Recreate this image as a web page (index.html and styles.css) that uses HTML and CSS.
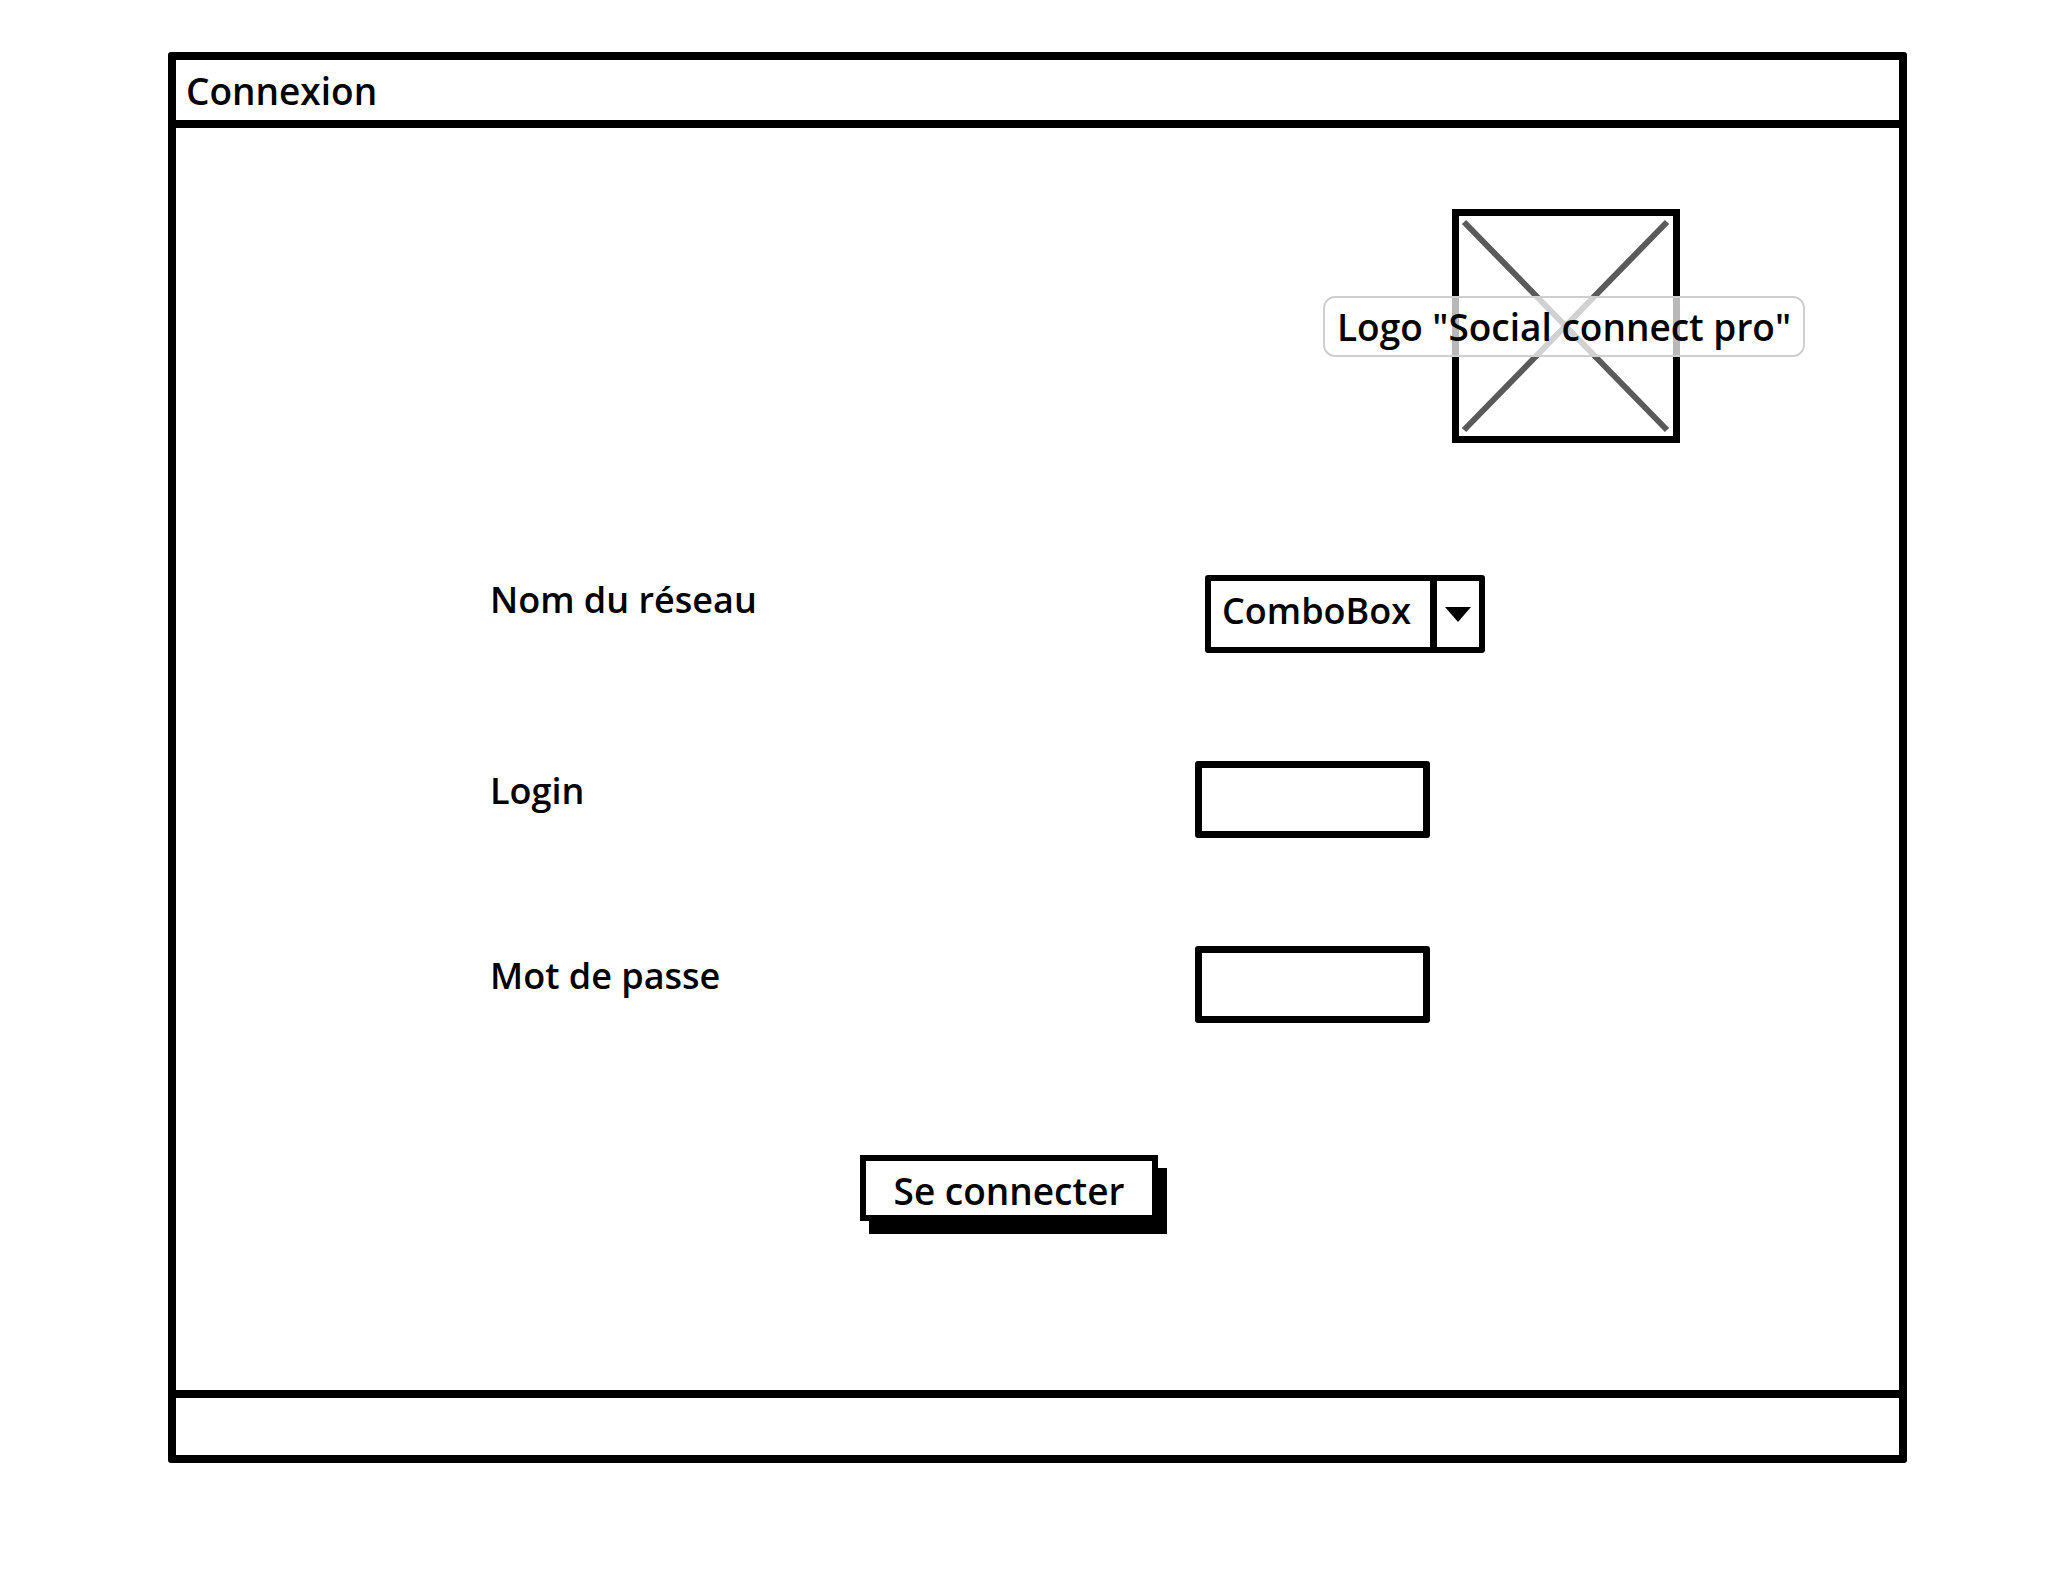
FILE: index.html
```html
<!DOCTYPE html>
<html lang="fr">
<head>
    <meta charset="UTF-8">
    <meta name="viewport" content="width=device-width, initial-scale=1.0">
    <title>Connexion</title>
    <link rel="stylesheet" href="styles.css">
</head>
<body>
    <div class="window">
        <div class="titlebar">Connexion</div>

        <div class="content">
            <div class="logo-row">
                <div class="logo">
                    <svg class="logo-cross" viewBox="0 0 214 220" width="214" height="220">
                        <line x1="5" y1="6" x2="208" y2="214" />
                        <line x1="208" y1="6" x2="5" y2="214" />
                    </svg>
                    <div class="logo-label">Logo "Social connect pro"</div>
                </div>
            </div>

            <div class="form">
                <div class="label">Nom du réseau</div>
                <div class="combo">
                    <span class="combo-text">ComboBox</span>
                    <span class="combo-arrow"></span>
                </div>

                <div class="label label-field">Login</div>
                <div class="input"></div>

                <div class="label label-field">Mot de passe</div>
                <div class="input"></div>
            </div>

            <div class="actions">
                <button class="btn">Se connecter</button>
            </div>
        </div>

        <div class="statusbar"></div>
    </div>
</body>
</html>
```

FILE: styles.css
```css
* {
    margin: 0;
    padding: 0;
    box-sizing: border-box;
}

body {
    background-color: #fff;
    font-family: "Open Sans", Arial, sans-serif;
    font-weight: 600;
    color: #000;
}

.window {
    display: flex;
    flex-flow: column;
    width: 1739px;
    height: 1411px;
    margin: 52px 0 0 168px;
    border: 8px solid #000;
    border-radius: 3px;
}

.titlebar {
    display: flex;
    align-items: center;
    height: 68px;
    padding-left: 10px;
    border-bottom: 8px solid #000;
    font-size: 37px;
    line-height: 1;
}

.content {
    flex: 1;
    display: flex;
    flex-flow: column;
}

.statusbar {
    height: 65px;
    border-top: 8px solid #000;
}

/* logo placeholder */
.logo-row {
    display: flex;
    padding-left: 1276px;
    margin-top: 81px;
}

.logo {
    position: relative;
    width: 228px;
    height: 234px;
    border: 7px solid #000;
}

.logo-cross {
    display: block;
}

.logo-cross line {
    stroke: #5a5a5a;
    stroke-width: 6;
}

.logo-label {
    position: absolute;
    left: -136px;
    top: 80px;
    width: 482px;
    height: 61px;
    display: flex;
    align-items: center;
    justify-content: center;
    background-color: rgba(255, 255, 255, 0.72);
    border: 2px solid #cfcfcf;
    border-radius: 12px;
    font-size: 37px;
    line-height: 1;
    white-space: nowrap;
}

/* form */
.form {
    display: grid;
    grid-template-columns: 705px auto;
    row-gap: 108px;
    align-items: start;
    justify-items: start;
    padding-left: 314px;
    margin-top: 132px;
}

.label {
    font-size: 36px;
    line-height: 1;
    margin-top: 7px;
}

.label-field {
    margin-top: 12px;
}

.combo {
    display: flex;
    width: 280px;
    height: 78px;
    margin-left: 10px;
    border: 6px solid #000;
    border-radius: 3px;
}

.combo-text {
    flex: 1;
    display: flex;
    align-items: center;
    padding: 0 0 6px 11px;
    font-size: 36px;
    line-height: 1;
    border-right: 7px solid #000;
}

.combo-arrow {
    display: flex;
    align-items: center;
    justify-content: center;
    width: 42px;
}

.combo-arrow::after {
    content: "";
    border-left: 13px solid transparent;
    border-right: 13px solid transparent;
    border-top: 15px solid #000;
}

.input {
    width: 235px;
    height: 77px;
    border: 7px solid #000;
    border-radius: 3px;
}

/* button */
.actions {
    display: flex;
    padding-left: 684px;
    margin-top: 132px;
}

.btn {
    width: 298px;
    height: 66px;
    padding-top: 4px;
    background-color: #fff;
    border: 6px solid #000;
    box-shadow: 9px 13px 0 #000;
    font-family: inherit;
    font-weight: inherit;
    font-size: 37px;
    line-height: 1;
    color: #000;
    cursor: pointer;
}
```
